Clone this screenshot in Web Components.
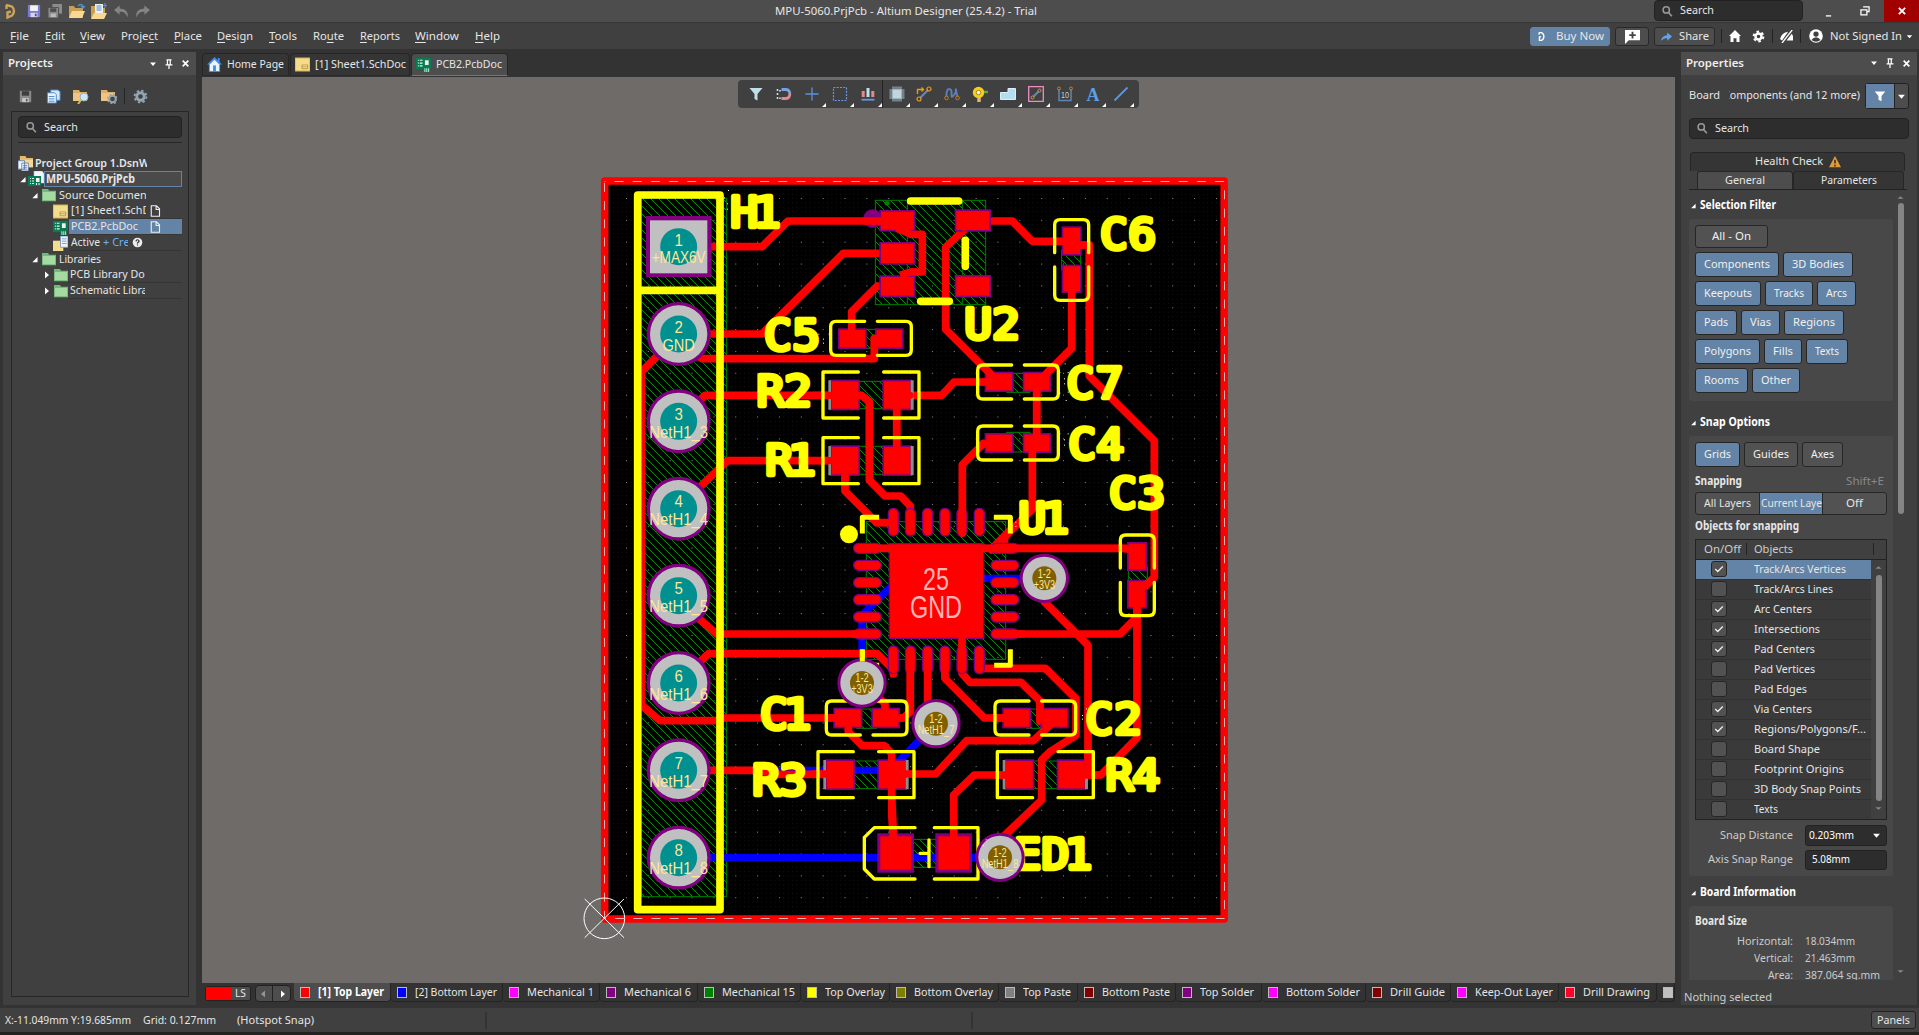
<!DOCTYPE html>
<html lang="en">
<head>
<meta charset="utf-8">
<title>MPU-5060.PrjPcb - Altium Designer</title>
<style>
html,body{margin:0;height:100%;overflow:hidden;background:#333}
body{font:12px/1 "Noto Sans","Open Sans",sans-serif;color:#e6e6e6}
</style>
</head>
<body>
<pcb-app></pcb-app>
<script>
const define = (name, html, setup) => customElements.define(name, class extends HTMLElement {
  connectedCallback() {
    if (this.shadowRoot) return;
    const root = this.attachShadow({ mode: 'open' });
    root.innerHTML = typeof html === 'function' ? html(this) : html;
    if (setup) setup(this, root);
  }
});
const t = (s, w, cls = '') => `<ui-text w="${w}" class="${cls}">${s}</ui-text>`;

/* text set to an exact advance width */
define('ui-text', `<style>:host{display:inline-block;white-space:pre;line-height:1.3;flex:none}span{display:inline-block;transform-origin:0 50%}</style><span><slot></slot></span>`,
  (el, root) => {
    const w = +el.getAttribute('w'), s = root.querySelector('span');
    if (!w) return;
    const n = s.getBoundingClientRect().width;
    el.style.width = w + 'px';
    s.style.transform = `scaleX(${w / n})`;
  });

const ICONS = {
  logo: `<path d="M3 2l6 1.500q4 4.500 0 9L4.500 14.500V9.500L8 8.500M3.500 2v4" fill="none" stroke="#c9a55c" stroke-width="2.400"/>`,
  logow: `<path d="M4 2.500h4q3.500 1.500 3.500 5.500T8 13.500H5V8.500h2.500M4.500 2.500v3" fill="none" stroke="#fff" stroke-width="1.900"/>`,
  save: `<path d="M1 1h14v14H1z" fill="#7b78d6"/><path d="M3.500 1.500h9V8h-9z" fill="#f2f2f2"/><path d="M4 10h8v5H4z" fill="#d7d7e8"/><path d="M9 11h2v3H9z" fill="#4b489c"/>`,
  saveg: `<path d="M1 1h14v14H1z" fill="#8b8b8b"/><path d="M3.500 1.500h9V7h-9z" fill="#3f3f3f"/><path d="M4 10h8v5H4z" fill="#c8c8c8"/><path d="M8.500 11h2v3h-2z" fill="#555"/>`,
  saveall: `<path d="M5 0h11v11H5z" fill="#8b8b8b"/><path d="M0 4h12v12H0z" fill="#8b8b8b" stroke="#4c4c4c"/><path d="M2.500 5h7v4h-7z" fill="#4c4c4c"/><path d="M3 11h6v4H3z" fill="#bbb"/>`,
  open: `<path d="M0 3h5l1 2h8v10H0z" fill="#c99f52"/><path d="M3 8h13l-3 7H0z" fill="#f8d893"/><path d="M9 3q3-3 5 0v2m-2-2l2 2 2-2" fill="none" stroke="#4d92d6" stroke-width="1.300"/>`,
  openp: `<path d="M0 3h5l1 2h8v10H0z" fill="#c99f52"/><path d="M4 1h8v10H4z" fill="#eef3fa"/><path d="M5.500 3h5m-5 2h5m-5 2h5" stroke="#5a87b8"/><path d="M3 10h13l-3 6H0z" fill="#f8d893"/><path d="M14 0v5m-2-2.500h4" stroke="#4d92d6" stroke-width="1.200"/>`,
  undo: `<path d="M6 1.500L0 6.500l6 5V8.300q6-1 8.500 6Q16 5 6 4.700z" fill="#848484"/>`,
  redo: `<path d="M10 1.500l6 5-6 5V8.300q-6-1-8.500 6Q0 5 10 4.700z" fill="#848484"/>`,
  docs: `<path d="M5 1h8l2 2v9H5z" fill="#d5e7fa" stroke="#4a86c8"/><path d="M1.500 4H9l2 2v9H1.500z" fill="#e8f2fd" stroke="#4a86c8"/><path d="M3 8h6m-6 2.500h6M3 13h6" stroke="#4a86c8"/>`,
  fsearch: `<path d="M0 2h6l1 2h7v9H0z" fill="#dcae68"/><path d="M0 5h14v8H0z" fill="#efc584"/><circle cx="11" cy="9" r="4" fill="#cfe6f5" stroke="#8db1c9"/><path d="M8 12l-3 4" stroke="#e2b84e" stroke-width="2"/>`,
  fgear: `<path d="M0 2h6l1 2h7v9H0z" fill="#dcae68"/><path d="M0 5h14v8H0z" fill="#efc584"/><circle cx="11.500" cy="11" r="3.300" fill="#454545" stroke="#93a5b3" stroke-width="2"/><circle cx="11.500" cy="11" r="4.700" fill="none" stroke="#93a5b3" stroke-width="1.500" stroke-dasharray="1.800 1.890"/>`,
  gear: `<circle cx="8" cy="8" r="4" fill="none" stroke="#93a5b3" stroke-width="3"/><circle cx="8" cy="8" r="6.300" fill="none" stroke="#93a5b3" stroke-width="2" stroke-dasharray="2.500 2.450"/>`,
  gearw: `<circle cx="8" cy="8" r="3.700" fill="none" stroke="#fff" stroke-width="3"/><circle cx="8" cy="8" r="6" fill="none" stroke="#fff" stroke-width="2.500" stroke-dasharray="3.100 3.180"/>`,
  search: `<circle cx="7" cy="6.500" r="4.200" fill="none" stroke="#999" stroke-width="2"/><path d="M10 10l4.500 5" stroke="#999" stroke-width="2.200"/>`,
  home: `<path d="M8 0L0 8h2v8h12V8h2l-2.500-2.600V1h-2v2.500z" fill="#3e8bf0"/><path d="M8 3L3 8v7h10V8z" fill="#eaf4ff"/><path d="M6.500 9h3v6h-3z" fill="#3e8bf0"/>`,
  homew: `<path d="M8 0L0 8h2v8h4v-5h4v5h4V8h2z" fill="#fff"/>`,
  sch: `<path d="M0 1h16v14H0z" fill="#f3dd8c"/><path d="M0 1h16v14H0z" fill="none" stroke="#caa648"/><path d="M7.500 8.500h6v4h-6zM7.500 10.500h6" stroke="#b8953c" fill="#fbf0c0"/>`,
  pcb: `<path d="M0 1h16v11h-2v4h-6v-3H0z" fill="#0a7a52"/><path d="M2 3.500h1m1 0h3M2 6.500h1m1 0h3M2 9.500h1m1 0h3" stroke="#d9ffe8" stroke-width="1.200"/><path d="M9.500 3.500h4v5h-4z" fill="#f2f2f2"/><path d="M9.500 12v4m2-4v4m2-4v4" stroke="#c9f5dc"/>`,
  prj: `<path d="M6 0h8l2 2.500V12H6z" fill="#f2f6fb" stroke="#bbb" stroke-width=".6"/><path d="M0 5h13v10H0z" fill="#0a7a52"/><path d="M2 7.500h1m1 0h2M2 10h1m1 0h2m-4 2.500h1m1 0h2" stroke="#d9ffe8" stroke-width="1.200"/><path d="M8 7h3.500v4H8zM8 12h1v2H8zm2.500 0h1v2h-1z" fill="#f2f2f2"/>`,
  grp: `<path d="M2 0h6l1 2h7v10H2z" fill="#e3b96e"/><path d="M2 4h14v8H2z" fill="#f5d79a"/><path d="M0 5h7v9H0zM4 7.500h7V16H4z" fill="#f0f5fb" stroke="#5b7ba6" stroke-width=".9"/><path d="M5.500 10h4m-4 2h4m-4 2h4" stroke="#5b7ba6"/>`,
  act: `<path d="M0 5h11v11H0z" fill="#f3dd8c"/><path d="M8 0h8v12H8z" fill="#f0f5fb" stroke="#7a99c0"/><path d="M9.500 3h5m-5 2.500h5m-5 2.500h5" stroke="#7a99c0"/>`,
  folder: `<path d="M0 1h7l1 2h8v12H0z" fill="#73b878"/><path d="M1 4.500h14V14H1z" fill="#a5dba3"/>`,
  page: `<path d="M3 1h7l4 4v10H3zM9.500 1v5H14" fill="none" stroke="#eee" stroke-width="1.500"/>`,
  help: `<circle cx="8" cy="8" r="7" fill="#eee"/><path d="M5.800 6.300Q6 4 8 4t2.200 2q0 1-1.200 1.700T8 9.600m0 1.200v1.700" fill="none" stroke="#333" stroke-width="1.800"/>`,
  caret: `<path d="M2 5h12l-6 7z" fill="#fff"/>`,
  pin: `<path d="M4 1.500h8M5.500 2v7M10 2v7M2.500 9.500h11M8 10v6" fill="none" stroke="#fff" stroke-width="2"/>`,
  close: `<path d="M3 3l10 10M13 3L3 13" stroke="#fff" stroke-width="3"/>`,
  min: `<path d="M2 12h12v3H2z" fill="#fff"/>`,
  restore: `<path d="M5 1.500h9.500V9H11M1.500 6H11v8H1.500z" fill="none" stroke="#fff" stroke-width="2"/>`,
  chat: `<path d="M0 1h16v11H4l-4 4z" fill="#fff"/><path d="M8 3v7M4.500 6.500h7" stroke="#444" stroke-width="2"/>`,
  share: `<path d="M9 2l7 6-7 6v-4Q4 10 0 14q1-7 9-8z" fill="#5aa7f2"/>`,
  eye: `<path d="M0 11Q2 3 10 2L2.500 13zM8 13L14.500 4.500Q17 8 16 13z" fill="#fff"/><path d="M2.500 16L15 0" stroke="#fff" stroke-width="1.600"/>`,
  user: `<circle cx="8" cy="8" r="7.800" fill="#fff"/><circle cx="8" cy="5.800" r="3" fill="#404040"/><path d="M2.800 12.500Q5 9.500 8 9.500t5.200 3Q8 16.500 2.800 12.500z" fill="#404040"/>`,
  funnel: `<path d="M1 2h14l-5 6v7l-4-2V8z" fill="#fff"/>`,
  warn: `<path d="M8 0l8 15H0z" fill="#e09a3e"/><path d="M8 5v5m0 1.500V14" stroke="#3a2a10" stroke-width="2"/>`,
  tri: `<path d="M15 2v12H3z" fill="#fff"/>`,
  trir: `<path d="M4 1l8 7-8 7z" fill="#fff"/>`,
  up: `<path d="M1 11l7-6 7 6z" fill="#888"/>`,
  down: `<path d="M1 5l7 6 7-6z" fill="#888"/>`,
  check: `<path d="M2 8l4 4 8-8" fill="none" stroke="#eee" stroke-width="2.200"/>`,
  b1: `<path d="M1.500 2h13L9.500 8v6.500l-3-1.500V8z" fill="#bfe0ea"/>`,
  b2: `<path d="M5.500 3.500H10q3.800.3 3.800 4.500" fill="none" stroke="#7aa2e0" stroke-width="2.800"/><path d="M13.800 8q0 4.200-3.800 4.500H5.500" fill="none" stroke="#e58a8a" stroke-width="2.800"/><path d="M1.500 3v2m0 2v2m0 2v2M4 4v1.500m0 6V13" stroke="#c8dede" stroke-width="1.600"/>`,
  b3: `<path d="M8 1.500v13M1.500 8h13" stroke="#5f8fe0" stroke-width="1.300"/>`,
  b4: `<path d="M1.500 1.500h13v13h-13z" fill="none" stroke="#6d95e6" stroke-width="1.200" stroke-dasharray="2 1.250"/>`,
  b5: `<path d="M3.200 5v6M12.800 5v6" stroke="#e58a8a" stroke-width="3"/><path d="M8 2v9" stroke="#bfe0ea" stroke-width="3"/><path d="M1.500 13.700h13" stroke="#5f9be8" stroke-width="1.800"/>`,
  b6: `<path d="M3 3h10v10H3z" fill="#c5d3da" stroke="#7396ac"/><path d="M4 .5v2m2-2v2m2-2v2m2-2v2m2-2v2M4 13.500v2m2-2v2m2-2v2m2-2v2m2-2v2M.5 4h2m-2 2h2m-2 2h2m-2 2h2m-2 2h2M13.500 4h2m-2 2h2m-2 2h2m-2 2h2m-2 2h2" stroke="#a9c4d4"/>`,
  b7: `<path d="M4 12l8-8" stroke="#6c87b0" stroke-width="2"/><circle cx="3" cy="13" r="2" fill="none" stroke="#e59c1e" stroke-width="1.200"/><circle cx="13" cy="3" r="2" fill="none" stroke="#e59c1e" stroke-width="1.200"/><path d="M1.500 8V3.500H7M5.500 1.500l2 2-2 2" fill="none" stroke="#e59c1e" stroke-width="1.400"/>`,
  b8: `<path d="M2.500 12Q2 3 5 3t2.500 5T10 9t2-5.500T14 12" fill="none" stroke="#5d7db5" stroke-width="2"/><circle cx="2.500" cy="12" r="1.800" fill="#404040" stroke="#c07f28"/><circle cx="13.500" cy="12" r="1.800" fill="#404040" stroke="#c07f28"/>`,
  b9: `<path d="M8 6h8" stroke="#58a844" stroke-width="2.500"/><path d="M7 7v9" stroke="#e6b36a" stroke-width="3.500"/><circle cx="6.500" cy="6.500" r="5.700" fill="#f5cd1c"/><circle cx="6.500" cy="6.500" r="2.200" fill="#fff" stroke="#a77f12"/>`,
  b10: `<path d="M.5 6.500H8v-4h7.500v11H.5z" fill="#b5dff0" stroke="#d8f1fa"/>`,
  b11: `<path d="M.7.700h14.600v14.600H.7z" fill="none" stroke="#f08cc8" stroke-width="1.300"/><path d="M5 11l6-6" stroke="#6c87b0" stroke-width="2"/><circle cx="4.500" cy="11.500" r="1.500" fill="#404040" stroke="#e59c1e"/><circle cx="11.500" cy="4.500" r="1.500" fill="#404040" stroke="#e59c1e"/>`,
  b12: `<path d="M2 3v11.500h12V3" fill="none" stroke="#5d86ae" stroke-width="1.500"/><circle cx="2" cy="2.500" r="1.500" fill="none" stroke="#c07f28"/><circle cx="14" cy="2.500" r="1.500" fill="none" stroke="#c07f28"/><text x="8" y="12" font-size="9" textLength="8" lengthAdjust="spacingAndGlyphs" text-anchor="middle" fill="#ccc" font-family="Liberation Sans">10</text>`,
  b13: `<text x="8" y="14.500" font-size="18" font-weight="700" text-anchor="middle" fill="#5b9fe6" font-family="Liberation Serif">A</text>`,
  b14: `<path d="M1.500 14.500l13-13" stroke="#4f9be8" stroke-width="1.800"/>`,
};
define('ui-icon', el => {
  const s = el.getAttribute('s') || 14;
  return `<style>:host{display:block;flex:none;width:${s}px;height:${s}px}svg{display:block}</style><svg width="${s}" height="${s}" viewBox="0 0 16 16">${ICONS[el.getAttribute('n')] || ''}</svg>`;
});
const ic = (n, s = 14, st = '') => `<ui-icon n="${n}" s="${s}" style="${st}"></ui-icon>`;

define('search-field', `<style>:host{display:flex;align-items:center;box-sizing:border-box;background:#2d2d2d;border:1px solid #222;border-radius:4px;padding-left:6px;gap:7px;font-size:11.500px}</style>${ic('search', 12)}<slot></slot>`);

define('title-bar', `<style>
:host{display:flex;height:22px;background:#4d4d4d;border-bottom:1px solid #363636;align-items:center}
.q{display:flex;gap:7px;padding-left:3px;flex:0 0 775px;box-sizing:border-box;align-items:center}
.c{font-size:11.500px}.r{flex:1;display:flex;justify-content:flex-end;align-items:center;height:22px}
search-field{width:149px;height:21px;margin:-1px 20px 0 0}
.x{width:35px;height:22px;background:#a00000;display:grid;place-items:center;margin-left:14px}
</style>
<div class="q">${ic('logo', 16)}${ic('save', 14, 'margin-left:1px')}${ic('saveall', 14)}${ic('open', 16, 'margin-right:-1px')}${ic('openp', 16)}${ic('undo', 15, 'margin-right:-1px')}${ic('redo', 15)}</div>
${t('MPU-5060.PrjPcb - Altium Designer (25.4.2) - Trial', 262, 'c')}
<div class="r"><search-field>${t('Search', 34)}</search-field>${ic('min', 7, 'margin:4px 28px 0 2px')}${ic('restore', 10)}<div class="x">${ic('close', 10)}</div></div>`);

define('menu-bar', `<style>
:host{display:flex;height:26px;background:#404040;align-items:center;padding-left:10px;font-size:11.500px}
u{text-underline-offset:2px}nav{display:flex;gap:15.700px;flex:1}
.b{display:flex;align-items:center;box-sizing:border-box;height:19px;border-radius:3px;border:1px solid #292929;background:#4d4d4d;justify-content:center;gap:7px}
.buy{width:80px;background:#6384a6;border-color:#6384a6;gap:9px}.s{width:1px;height:14px;background:#222}
</style>
<nav>${t('<u>F</u>ile', 19)}${t('<u>E</u>dit', 20)}${t('<u>V</u>iew', 25)}${t('Proje<u>c</u>t', 37)}${t('<u>P</u>lace', 28)}${t('<u>D</u>esign', 36)}${t('<u>T</u>ools', 28)}${t('Ro<u>u</u>te', 31)}${t('<u>R</u>eports', 40)}${t('<u>W</u>indow', 44)}${t('<u>H</u>elp', 25)}</nav>
<div class="b buy">${ic('logow', 11)}${t('Buy Now', 48)}</div><div class="b" style="width:34px;margin:0 5px">${ic('chat', 15)}</div>
<div class="b" style="width:61px">${ic('share', 11)}${t('Share', 30)}</div>
<div class="s" style="margin:0 7px 0 6px"></div>${ic('homew', 12)}<i style="width:11px"></i>${ic('gearw', 13)}<div class="s" style="margin:0 7px"></div>${ic('eye', 13)}<div class="s" style="margin:0 8px 0 7px"></div>${ic('user', 14)}<i style="width:7px"></i>${t('Not Signed In', 72)}${ic('caret', 7, 'margin:0 6px 0 4px')}`);

define('panel-head', `<style>:host{display:flex;height:23px;background:#4d4d4d;align-items:center;padding:0 6px 0 5px;gap:7px;font-size:11.500px;font-weight:600;box-sizing:border-box}div{flex:1;display:flex;color:#eee}</style>
<div><slot></slot></div>${ic('caret', 8)}${ic('pin', 10)}${ic('close', 9)}`);

const row = (pad, arrow, icon, body, cls = '') => `<div class="row ${cls}"><i style="width:${pad}px"></i>${arrow}${icon}${body}</div>`;
define('projects-panel', `<style>
:host{display:flex;flex-direction:column;width:193px;background:#404040;font-size:11.500px}
.tools{display:flex;height:20px;margin:11px 0 5px 15.500px;align-items:center}
.frame{flex:1;border:1px solid #272727;margin:0 7.500px 8px 8px;padding:4px 6px 0}
search-field{height:22px}.hr{height:1px;background:#262626;margin:4px 0 12px}
.row{display:flex;height:16px;align-items:center}.clip{overflow:hidden;height:16px;display:flex;align-items:center}
.lbl{display:flex;align-items:center;flex:1;height:16px;box-sizing:border-box;border-bottom:1px solid #353535;padding-left:2px}
.cur{border:1px solid #6384a6;background:#4a4a4a;font-weight:700;padding-left:1px}.sel{background:#6384a6}
b{font-weight:600}
</style>
<panel-head>${t('Projects', 45)}</panel-head>
<div class="tools">${ic('saveg', 13, 'margin-right:14px')}${ic('docs', 15, 'margin-right:12.500px')}${ic('fsearch', 16, 'margin-right:12px')}${ic('fgear', 16, 'margin-right:7px')}<i style="width:1px;height:16px;background:#262626;margin-right:8px"></i>${ic('gear', 15)}</div>
<div class="frame"><search-field>${t('Search', 34)}</search-field><div class="hr"></div>
${row(0, '', ic('grp', 15), `<div class="clip" style="width:112px;margin-left:2px"><b>${t('Project Group 1.DsnWrk', 125)}</b></div>`)}
${row(1, ic('tri', 7), '', `<i style="width:2px"></i>${ic('prj', 16)}<div class="lbl cur">${t('MPU-5060.PrjPcb', 89)}</div>`)}
${row(13, ic('tri', 7), '', `<i style="width:4px"></i>${ic('folder', 14)}<div class="clip" style="width:87px;margin-left:3px">${t('Source Documents', 97)}</div>`)}
${row(35, '', ic('sch', 15), `<div class="lbl" style="margin-left:1px"><div class="clip" style="width:75px">${t('[1] Sheet1.SchDoc', 91)}</div>${ic('page', 12, 'margin-left:3px')}</div>`)}
${row(35, '', ic('pcb', 15), `<div class="lbl sel" style="margin-left:1px"><div class="clip" style="width:75px">${t('PCB2.PcbDoc', 67)}</div>${ic('page', 12, 'margin-left:3px')}</div>`)}
${row(35, '', ic('act', 15), `<div class="lbl" style="margin-left:1px"><div class="clip" style="width:57px">${t('Active', 29)}<span style="color:#6cb0f5;display:flex;margin-left:3px">${t('+ Create', 43)}</span></div>${ic('help', 11, 'margin-left:4px')}</div>`)}
${row(13, ic('tri', 7), '', `<i style="width:4px"></i>${ic('folder', 14)}<div class="clip" style="margin-left:3px">${t('Libraries', 42)}</div>`)}
${row(25, ic('trir', 8), '', `<i style="width:3px"></i>${ic('folder', 14)}<div class="lbl"><div class="clip" style="width:75px">${t('PCB Library Documents', 118)}</div></div>`)}
${row(25, ic('trir', 8), '', `<i style="width:3px"></i>${ic('folder', 14)}<div class="lbl"><div class="clip" style="width:75px">${t('Schematic Library Documents', 146)}</div></div>`)}
</div>`);

define('doc-tabs', `<style>
:host{display:flex;height:25px;gap:1px;font-size:11.500px;padding-top:1px;box-sizing:border-box}
div{display:flex;align-items:center;box-sizing:border-box;height:23px;border:1px solid #262626;border-bottom-color:#2a2a2a;border-radius:4px 4px 0 0;background:#353535;gap:5px;padding-left:4px}
.on{background:#4d4d4d;border-bottom:1px solid #777}</style>
<div style="width:87px">${ic('home', 15)}${t('Home Page', 57)}</div><div style="width:120px">${ic('sch', 15)}${t('[1] Sheet1.SchDoc', 91)}</div><div class="on" style="width:97px">${ic('pcb', 15)}${t('PCB2.PcbDoc', 66)}</div>`);

define('draw-toolbar', () => `<style>
:host{display:flex;width:401px;height:28px;box-sizing:border-box;background:#404040;border-radius:4px;padding-left:4px}
div{width:28.050px;height:28px;display:grid;place-items:center;position:relative}
.m::after{content:"";position:absolute;right:.5px;bottom:1px;border:2.500px solid transparent;border-right-color:#fff;border-bottom-color:#fff}
.s{border-left:1px solid #222;box-sizing:border-box}</style>` +
  Array.from({ length: 14 }, (_, i) => `<div class="${i > 1 ? 'm' : ''} ${i === 5 ? 's' : ''}">${ic('b' + (i + 1), 16)}</div>`).join(''));

/* ---- board drawing, coordinates in thirds of a pixel ---- */
const tr = (...p) => p.map(s => `<polyline points="${s}"/>`).join('');
const pad = (x1, y1, x2, y2, b = 5) => `<rect x="${x1 + b / 2}" y="${y1 + b / 2}" width="${x2 - x1 - b}" height="${y2 - y1 - b}" fill="#f00" stroke="#800080" stroke-width="${b}"/>`;
const hatch = (x1, y1, x2, y2) => `<rect x="${x1}" y="${y1}" width="${x2 - x1}" height="${y2 - y1}" fill="url(#h)" stroke="#008000" stroke-width="3"/>`;
const capH = (x, y) => `<path d="M${x - 19} ${y - 51}H${x - 105}q-16 0-16 16v70q0 16 16 16H${x - 19}M${x + 19} ${y - 51}H${x + 105}q16 0 16 16v70q0 16-16 16H${x + 19}"/>`;
const capV = (x, y) => `<path d="M${x - 51} ${y - 22}V${y - 105}q0-16 16-16h70q16 0 16 16V${y - 22}M${x - 51} ${y + 21}V${y + 105}q0 16 16 16h70q16 0 16-16V${y + 21}"/>`;
const resO = (x, y) => `<path d="M${x - 38} ${y - 69}H${x - 144}V${y + 69}H${x - 38}M${x + 38} ${y - 69}H${x + 144}V${y + 69}H${x + 38}"/>`;
const resP = (x, y) => `${pad(x - 123, y - 46, x - 33, y + 46)}${pad(x + 34, y - 46, x + 123, y + 46)}<path d="M${x - 120} ${y - 44}h-8v88h8zM${x + 119} ${y - 44}h9v88h-9z" fill="#8c8c8c"/>`;
const DX = 1.1;
const des = (s, xs, b) => `<text transform="scale(${DX} 1)" x="${xs.map(v => (v / DX - 37.5).toFixed(1)).join(' ')}" y="${b - 7}">${s}</text>`;
const lab = (s, x, y, w, size, fill = '#ffe699') => `<text x="${x}" y="${y + size * .36}" font-size="${size}" fill="${fill}" text-anchor="middle" ${w ? `textLength="${w}" lengthAdjust="spacingAndGlyphs"` : ''}>${s}</text>`;
const hole = (n, net, y, w) => `<circle cx="266" cy="${y}" r="96" fill="#800080"/><circle cx="266" cy="${y}" r="86" fill="#c0c0c0"/><circle cx="266" cy="${y}" r="55.500" fill="#009090"/>${lab(n, 266, y - 23, 25, 52)}${lab(net, 266, y + 31, w, 52)}`;
const via = (x, y, net, w) => `<circle cx="${x}" cy="${y}" r="74" fill="#800080"/><circle cx="${x}" cy="${y}" r="65" fill="#c0c0c0"/><circle cx="${x}" cy="${y}" r="36" fill="#7f6000"/>${lab('1-2', x, y - 15, 40, 36)}${lab(net, x, y + 18, w, 36)}`;
const pinV = y => [220, 271.5, 323, 375, 426, 478].map(x => `<rect x="${x - 15}" y="${y}" width="30" height="83" rx="15"/>`).join('');
const pinH = x => [145, 196, 248, 299, 351, 402].map(y => `<rect x="${x}" y="${y - 15}" width="83" height="30" rx="15"/>`).join('');
const A = s => `<g>${s}</g>`, B = s => `<g transform="translate(690 0)">${s}</g>`, C = s => `<g transform="translate(0 1110)">${s}</g>`, D = s => `<g transform="translate(690 990)">${s}</g>`;
const dots = pts => pts.map(([x, y]) => `<rect x="${x}" y="${y}" width="3" height="3" fill="#fff"/>`).join('');

define('pcb-board', () => `<style>:host{display:block}svg{display:block}text{font-family:"Liberation Sans",sans-serif}
.des text{font-family:"DejaVu Sans Mono",monospace;font-size:126px;fill:#ff0;stroke:#ff0;stroke-width:13px;stroke-linejoin:round}</style>
<svg width="1473" height="906" viewBox="202 77 1473 906"><defs>
<pattern id="h" width="24" height="24" patternUnits="userSpaceOnUse"><path d="M-3 -3L27 27M-3 21L3 27M21 -3L27 3" stroke="#008c00" stroke-width="3"/></pattern>
<pattern id="g" x="626" y="198" width="21.850" height="21.850" patternUnits="userSpaceOnUse"><rect width="1" height="1" fill="#8a8a8a"/></pattern>
<pattern id="f" x="626" y="198" width="4.370" height="4.370" patternUnits="userSpaceOnUse"><rect width="1" height="1" fill="#141414"/></pattern></defs>
<rect x="604.500" y="181" width="620" height="738"/><rect x="604.500" y="181" width="620" height="738" fill="url(#f)"/><rect x="608" y="185" width="612" height="730" fill="url(#g)"/>
<rect x="604.700" y="181" width="619.500" height="738" fill="none" stroke="#f00" stroke-width="7.500" stroke-linejoin="round"/>
<rect x="604.500" y="181.500" width="620" height="737" fill="none" stroke="#d9b3b3" stroke-dasharray="9 9.200" stroke-dashoffset="-10"/>
<g transform="translate(590 170) scale(.333333)" fill="none">
${A(hatch(154, 85, 410, 2180))}
${B(hatch(166, 91, 497, 404) + '<path d="M262 91V404M427 91V404" stroke="#008000" stroke-width="3"/><circle cx="201" cy="100" r="7" fill="#008000"/>' + hatch(118, 478, 190, 535) + hatch(118, 634, 190, 716) + hatch(118, 829, 190, 913) + hatch(560, 610, 630, 667) + hatch(560, 787, 630, 846) + hatch(725, 240, 782, 300))}
${D(hatch(139, 65, 557, 478) + hatch(925, 200, 982, 255) + hatch(110, 627, 170, 685) + hatch(620, 627, 680, 685) + hatch(95, 783, 185, 866) + hatch(630, 783, 720, 866) + hatch(270, 1018, 360, 1102))}
<g stroke="#00f" stroke-width="22">
${C(tr('525,691 905,691'))}${D(tr('-338,1073 540,1073', '215,805 348,671', '480,235 673,235', '126,549 126,345 215,258'))}</g>
<g stroke="#f00" stroke-width="23" stroke-linecap="round" stroke-linejoin="round">
${A(tr('340,230 516,230 594,153 880,153', '340,492 516,492 760,250 880,250', '290,520 335,566 853,566 853,505 890,505', '315,705 345,676 760,676', '320,960 412,872 760,872', '210,550 154,606 154,1605 210,1652 385,1652 400,1644 770,1644', '880,348 862,348 785,425 785,490'))}
${B(tr('230,160 273,193 307,193 307,306 273,306 240,340', '458,155 377,232 377,478 530,630', '480,153 577,153 637,214 755,214', '755,225 808,225 808,618 1003,812 1003,1222 960,1265', '755,330 755,535 660,630', '240,676 365,676 402,636 530,636', '650,640 650,820', '637,820 637,1018 515,1140', '530,820 490,820 427,884 427,1060', '75,676 125,676 148,695 148,930 195,978 242,978 271,1008 271,1060', '230,690 230,850', '75,880 75,963 170,1058 220,1058'))}
${C(tr('320,230 380,282 840,282', '320,375 355,341 862,341 910,389 910,402', '961,360 961,515 940,534 890,534', '816,430 885,490 885,520', '775,540 775,575 817,617 883,617 905,640 905,770 911,900', '340,691 520,691 535,703 750,703'))}
${D(tr('140,145 940,145', '555,402 900,402 950,352', '951,300 951,714 843,825 760,825', '673,235 673,305 804,436 804,815', '323,480 323,620', '375,480 375,535 493,654 580,654', '426,400 426,520 450,547 603,547 660,603 660,665', '478,480 478,505 676,505 768,596 768,706 690,755 665,780 665,900 545,1015', '700,665 640,722 440,722 347,822 230,822', '401,1040 401,885 463,825 580,825'))}</g>
${B('<path d="M505 1130L565 1070V1130z" fill="#f00"/><circle cx="158" cy="146" r="28" fill="#800080"/>' + pad(178, 120, 286, 184) + pad(178, 216, 286, 284) + pad(178, 316, 286, 382) + pad(404, 118, 513, 185) + pad(404, 315, 513, 382)
  + '<path d="M130 153H200M230 175L273 193H290M240 315L273 306H290M425 175L458 160" stroke="#f00" stroke-width="22"/>'
  + pad(54, 475, 140, 537) + pad(165, 475, 251, 537) + pad(494, 605, 581, 666) + pad(608, 605, 693, 666) + pad(494, 789, 581, 849) + pad(608, 789, 693, 849) + pad(725, 169, 785, 257) + pad(725, 284, 785, 369) + resP(153, 675) + resP(153, 872))}
${D('<g fill="#f00" stroke="#800080" stroke-width="4">' + pinV(25) + pinV(438) + pinH(101) + pinH(513) + '</g>' + '<rect x="208" y="131" width="283" height="284" fill="#f00" stroke="#800080" stroke-width="4"/>'
  + pad(40, 623, 127, 685) + pad(154, 623, 240, 685) + pad(547, 623, 633, 685) + pad(660, 623, 746, 685) + pad(921, 126, 981, 213) + pad(921, 239, 981, 326) + resP(138, 824) + resP(676, 824) + pad(172, 1000, 282, 1118, 9) + pad(346, 1000, 456, 1118, 9))}
<g stroke="#f00" stroke-width="22" stroke-linecap="round" stroke-linejoin="round">
${B(tr('95,500 95,470', '163,530 163,505 190,505', '40,676 -20,676', '75,676 125,676 148,695', '270,676 240,676', '230,700 230,850', '75,900 75,950', '40,872 -20,872', '500,600 530,630', '690,600 660,630', '510,636 490,636', '650,645 650,820', '637,830 637,860', '490,822 520,822', '740,214 700,214', '770,225 808,225', '755,350 755,390', '271,1030 271,1080', '427,1020 427,1090', '170,1058 220,1058'))}
${D(tr('115,145 912,145 935,150', '150,402 100,402', '570,402 610,402', '426,395 426,500', '323,460 323,600', '271,460 271,600', '375,460 375,530', '965,265 1003,232', '951,310 951,400', '60,654 20,654', '195,640 195,625', '220,654 245,654', '85,660 85,690', '660,603 660,660', '700,665 675,690', '560,654 520,654', '230,822 270,822', '215,780 215,950 221,1040', '401,1030 401,950', '580,825 530,825', '780,825 830,825', '804,760 804,815', '30,822 -20,822'))}</g>
<g stroke="#ff0" stroke-width="23" stroke-linejoin="round" stroke-linecap="round">
${A('<path d="M143 75H390V2219H143zM143 361H390"/>')}
${B('<path d="M272 93H416M302 394H388M436 211V289"/>')}
<g stroke-width="10">${B(capH(153, 505) + capH(594, 636) + capH(594, 819) + capV(755, 270) + resO(153, 675) + resO(153, 872))}
${D(capH(140, 654) + capH(646, 654) + capV(952, 226) + resO(138, 824) + resO(676, 824) + '<path d="M285 983H163L133 1012V1107L163 1137H285M343 983H474V1137H343M327 1020V1100M300 1060H327"/>')}</g>
${D('<g stroke-width="15" stroke-linecap="square"><path d="M127 93V52H170M529 52H571V93M571 455V496H530M127 455V496H170"/></g><circle cx="87" cy="103" r="27" fill="#ff0" stroke="none"/>')}</g>
<g class="des">
${A(des('H1', [462, 530], 179) + des('C5', [563, 648], 546) + des('R2', [541, 623], 715) + des('R1', [567, 635], 923))}
${B(des('C6', [881, 966], 244) + des('U2', [474, 557], 513) + des('C7', [781, 868], 690) + des('C4', [786, 870], 873) + des('C3', [908, 993], 1020) + des('U1', [636, 705], 1095))}
${C(des('C1', [551, 622], 575) + des('R3', [528, 609], 771))}
${D(des('C2', [838, 923], 708) + des('R4', [898, 978], 878) + des('LED1', [538, 622, 706, 775], 1114))}</g>
${A('<rect x="168" y="138" width="196" height="183" fill="#800080"/><rect x="180" y="151" width="172" height="159" fill="#c0c0c0"/><circle cx="266" cy="230" r="55.500" fill="#009090"/>' + lab('1', 266, 209, 25, 52) + lab('+MAX6V', 266, 259, 162, 52)
  + hole('2', 'GND', 492, 97) + hole('3', 'NetH1_3', 754, 176) + hole('4', 'NetH1_4', 1016, 176) + hole('5', 'NetH1_5', 1277, 176) + hole('6', 'NetH1_6', 1539, 176) + hole('7', 'NetH1_7', 1801, 176) + hole('8', 'NetH1_8', 2063, 176))}
${D(lab('25', 348, 237, 78, 92, '#ffb3b3') + lab('GND', 348, 321, 156, 92, '#ffb3b3') + via(673, 235, '+3V3', 64) + via(126, 549, '+3V3', 64) + via(348, 671, 'NetH1_7', 110) + via(540, 1072, 'NetH1_8', 110) + '<path d="M127 452V484" stroke="#ff0" stroke-width="15"/>')}
${dots([[414, 60], [402, 82], [426, 82], [411, 100], [411, 116], [685, 491], [716, 491], [699, 506], [699, 518]])}
${B(dots([[734, 580], [718, 606], [743, 606], [732, 625], [732, 640], [718, 668], [743, 665], [737, 690], [718, 790], [743, 790], [732, 808], [732, 824], [575, 1043], [597, 1043], [586, 1055], [586, 1068]]))}
${D(dots([[765, 625], [798, 625], [786, 645], [786, 656], [475, 1018], [497, 1018], [488, 1035]]))}
${C('<g stroke="#fff" stroke-width="3"><circle cx="43" cy="1135" r="61"/><path d="M-16 1077L102 1193M102 1077L-16 1193"/></g>')}
</g></svg>`);

const LAYERS = [['[1] Top Layer', '#f00', 97, 66], ['[2] Bottom Layer', '#00f', 112, 82], ['Mechanical 1', '#f0f', 97, 67], ['Mechanical 6', '#800080', 98, 67], ['Mechanical 15', '#008000', 103, 73], ['Top Overlay', '#ff0', 89, 60], ['Bottom Overlay', '#808000', 109, 79], ['Top Paste', '#808080', 79, 48], ['Bottom Paste', '#800000', 98, 68], ['Top Solder', '#800080', 86, 54], ['Bottom Solder', '#f0f', 104, 74], ['Drill Guide', '#800000', 85, 55], ['Keep-Out Layer', '#f0f', 108, 78], ['Drill Drawing', '#ff0026', 98, 67], ['', '#c0c0c0', 18, 0]];
define('layer-bar', () => `<style>
:host{display:flex;height:19px;font-size:11.500px;overflow:hidden;border-top:0}
.k{display:flex;align-items:center;height:19px;box-sizing:border-box;border:1px solid #232323;border-top:0;border-left:0;border-radius:0 0 4px 4px;padding-left:6px;flex:none;gap:8px}
.k i{width:8px;height:9px;border:1px solid #bbb;flex:none}.on{background:#4d4d4d;font-weight:700;color:#fff}.k ui-text{margin-top:1px}
.ls{width:46px;height:15px;margin:3px 4px 0 3px;border:1px solid #222;box-sizing:border-box;display:flex;align-items:center;background:#4d4d4d;border-radius:2px}.ls i{width:25px;height:13px;background:#f00;margin-right:4px}
.nav{width:36px;height:17px;margin:2px 3px 0 0;border:1px solid #222;border-radius:4px;box-sizing:border-box;background:#4d4d4d;display:flex;align-items:center;justify-content:space-around}
</style><div class="ls"><i></i>${t('LS', 11)}</div><div class="nav">${ic('trir', 8, 'transform:scaleX(-1);opacity:.4')}<i style="width:1px;height:15px;background:#222"></i>${ic('trir', 8)}</div>` +
  LAYERS.map(([n, c, w, tw], i) => `<div class="k ${i ? '' : 'on'}" style="width:${w}px"><i style="background:${c}"></i>${n ? t(n, tw) : ''}</div>`).join(''));

define('filter-chip', el => `<style>:host{display:grid;place-items:center;box-sizing:border-box;height:${el.hasAttribute('low') ? 23 : 25}px;width:${el.getAttribute('width')}px;border:1px solid #262626;border-radius:3px;background:${el.hasAttribute('on') ? '#6384a6' : '#525252'};color:#f0f0f0}</style>${t(el.textContent, el.getAttribute('tw'))}`);
const chip = (s, w, tw, on = 'on') => `<filter-chip ${on} width="${w}" tw="${tw}">${s}</filter-chip>`;

define('snap-row', el => `<style>:host{display:flex;height:20px;align-items:center;box-sizing:border-box;border-bottom:1px solid #323232;background:${el.hasAttribute('sel') ? '#6384a6' : '#3a3a3a'}}
.c{width:16px;height:16px;box-sizing:border-box;border:1px solid #262626;border-radius:3px;background:#525252;margin:0 27px 0 15px;display:grid;place-items:center}</style>
<div class="c">${el.hasAttribute('ck') ? ic('check', 10) : ''}</div>${t(el.textContent, el.getAttribute('tw'))}`);
const SNAP = [['Track/Arcs Vertices', 92, 'ck sel'], ['Track/Arcs Lines', 79, ''], ['Arc Centers', 58, 'ck'], ['Intersections', 66, 'ck'], ['Pad Centers', 61, 'ck'], ['Pad Vertices', 61, ''], ['Pad Edges', 53, ''], ['Via Centers', 58, 'ck'], ['Regions/Polygons/F...', 112, 'ck'], ['Board Shape', 66, ''], ['Footprint Origins', 90, ''], ['3D Body Snap Points', 107, ''], ['Texts', 24, '']];

define('panel-section', el => `<style>:host{display:block}h3{margin:0;display:flex;align-items:center;gap:4px;height:18px;font-size:11.500px;color:#fff;padding-left:1px}
.box{background:#484848;border-radius:3px;margin-top:4px;box-sizing:border-box;height:${el.getAttribute('h')}px;width:204px;padding:6px 6px 0}</style>
<h3>${ic('tri', 6)}${t(el.getAttribute('name'), el.getAttribute('tw'))}</h3><div class="box"><slot></slot></div>`);

define('properties-panel', () => `<style>
:host{display:flex;flex-direction:column;width:236px;background:#404040;font-size:11.500px;height:953px}
.top{display:flex;align-items:center;height:26px;margin:8px 0 9px 8px}
.clip{overflow:hidden;width:131px;margin:0 5px 0 9px;display:flex;justify-content:flex-end}
.fb{width:44px;height:26px;border:1px solid #232323;border-radius:3px;box-sizing:border-box;display:flex;background:#4d4d4d}.fb div{width:28px;display:grid;place-items:center;background:#6384a6;border-right:1px solid #232323}
search-field{margin:0 8px 0 8px;height:21px}
.hc{height:19px;margin:13px 12px 0 9px;border:1px solid #262626;border-bottom:0;border-radius:4px 4px 0 0;background:#353535;display:flex;align-items:center;justify-content:center;gap:6px;box-sizing:border-box}
.tabs{display:flex;height:18px;margin:0 10px 0 8px;padding-left:8px;border-bottom:1px solid #222}.tabs div{box-sizing:border-box;border:1px solid #262626;border-bottom:0;border-radius:3px 3px 0 0;display:grid;place-items:center;width:96px;background:#4d4d4d}.tabs div+div{width:111px;background:#353535}
.body{display:flex;height:795px;overflow:hidden;padding-left:8px}.main{width:204px;padding-top:7px}
.line{display:flex;gap:4px;margin-bottom:4px}
.bar{width:18px;display:flex;flex-direction:column;align-items:center;padding-top:4px;margin-left:-1.500px}.bar b{width:6px;height:311px;background:#858585;border-radius:3px;margin-top:2px}
.between{display:flex;justify-content:space-between;align-items:center}
.seg{display:flex;height:23px;border:1px solid #262626;border-radius:3px;box-sizing:border-box;background:#525252;overflow:hidden}.seg div{display:grid;place-items:center;flex:1;overflow:hidden}.seg .on{background:#6384a6;border:solid #262626;border-width:0 1px}
.tbl{height:281px;border:1px solid #222;box-sizing:border-box;background:#3a3a3a;overflow:hidden}
.th{display:flex;height:20px;border-bottom:1px solid #222;background:#404040;align-items:center;box-sizing:border-box;padding-left:8px;color:#ccc}.th i{width:1px;height:12px;background:#222}
.tb{display:flex}.tb>.rows{width:176px}.sb{width:15px;background:#404040;display:flex;flex-direction:column;align-items:center;padding-top:4px;height:256px}.sb b{width:6px;height:226px;background:#858585;border-radius:3px;margin:4px 0 4px}
.f{display:flex;justify-content:flex-end;align-items:center;gap:12px;color:#ccc}.in{width:82px;height:21px;background:#2d2d2d;border:1px solid #222;border-radius:3px;box-sizing:border-box;display:flex;align-items:center;justify-content:space-between;padding:0 5px 0 3px;color:#fff}
.kv{display:flex;gap:12px;height:17px;align-items:center;color:#ccc}.kv>span{width:98px;display:flex;justify-content:flex-end}
</style>
<panel-head>${t('Properties', 58)}</panel-head>
<div class="top">${t('Board', 31)}<div class="clip">${t('Components (and 12 more)', 137)}</div><div class="fb"><div>${ic('funnel', 12)}</div>${ic('caret', 9, 'margin:8px 0 0 2px')}</div></div>
<search-field>${t('Search', 34)}</search-field>
<div class="hc">${t('Health Check', 68)}${ic('warn', 12)}</div>
<div class="tabs"><div>${t('General', 40)}</div><div>${t('Parameters', 56)}</div></div>
<div class="body"><div class="main">
<panel-section name="Selection Filter" tw="76" h="182">
<div class="line"><filter-chip low width="73" tw="39">All - On</filter-chip></div>
<div class="line">${chip('Components', 84, 66)}${chip('3D Bodies', 70, 52)}</div>
<div class="line">${chip('Keepouts', 66, 48)}${chip('Tracks', 48, 30)}${chip('Arcs', 39, 21)}</div>
<div class="line">${chip('Pads', 42, 24)}${chip('Vias', 39, 21)}${chip('Regions', 60, 42)}</div>
<div class="line">${chip('Polygons', 65, 47)}${chip('Fills', 38, 20)}${chip('Texts', 42, 24)}</div>
<div class="line">${chip('Rooms', 53, 35)}${chip('Other', 48, 30)}</div></panel-section>
<panel-section name="Snap Options" tw="70" h="440" style="margin-top:13px">
<div class="line">${chip('Grids', 45, 27)}${chip('Guides', 54, 36, '')}${chip('Axes', 41, 23, '')}</div>
<div class="between" style="height:21px;padding-right:3px"><b>${t('Snapping', 47)}</b><span style="color:#888">${t('Shift+E', 38)}</span></div>
<div class="seg"><div>${t('All Layers', 47)}</div><div class="on">${t('Current Laye', 61)}</div><div>${t('Off', 17)}</div></div>
<div class="between" style="height:24px"><b>${t('Objects for snapping', 104)}</b></div>
<div class="tbl"><div class="th">${t('On/Off', 37)}<i style="margin:0 7px 0 5px"></i>${t('Objects', 39)}<i style="margin-left:80px"></i></div>
<div class="tb"><div class="rows">${SNAP.map(([n, w, a]) => `<snap-row ${a} tw="${w}">${n}</snap-row>`).join('')}</div><div class="sb">${ic('up', 7)}<b></b>${ic('down', 7)}</div></div></div>
<div class="f" style="margin-top:5px">${t('Snap Distance', 73)}<div class="in">${t('0.203mm', 45)}${ic('caret', 9)}</div></div>
<div class="f" style="margin-top:4px">${t('Axis Snap Range', 85)}<div class="in" style="padding-left:6px;height:20px">${t('5.08mm', 38)}</div></div></panel-section>
<panel-section name="Board Information" tw="96" h="79" style="margin-top:8px">
<div style="height:19px;margin-top:2px"><b>${t('Board Size', 52)}</b></div>
<div class="kv"><span>${t('Horizontal:', 56)}</span>${t('18.034mm', 50)}</div><div class="kv"><span>${t('Vertical:', 39)}</span>${t('21.463mm', 50)}</div><div class="kv"><span>${t('Area:', 25)}</span>${t('387.064 sq.mm', 75)}</div></panel-section>
</div><div class="bar">${ic('up', 7)}<b></b>${ic('down', 7, 'margin-top:454px')}</div></div>
<div style="padding:10px 0 0 3px;color:#ccc">${t('Nothing selected', 88)}</div>`);

define('status-bar', `<style>:host{display:flex;height:24px;background:#404040;border-bottom:3px solid #23221f;font-size:11.500px;align-items:center;box-sizing:content-box;padding-left:5px}
i{width:2px;height:17px;background:#333}.p{width:45px;height:18px;border:1px solid #222;border-radius:3px;background:#4d4d4d;display:grid;place-items:center;box-sizing:border-box;margin:0 3px 0 auto}</style>
${t('X:-11.049mm Y:19.685mm', 126)}<b style="width:12px"></b>${t('Grid: 0.127mm', 73)}<b style="width:21px"></b>${t('(Hotspot Snap)', 77)}<i style="margin-left:171px"></i><i style="margin-left:484px"></i><div class="p">${t('Panels', 33)}</div>`);

define('pcb-app', `<style>
:host{display:flex;flex-direction:column;width:1919px;height:1035px;background:#333;position:relative}
.mid{display:flex;height:956px;padding:3px 2px 0 3px;box-sizing:border-box}
.left{display:flex;height:953px}.ed{width:1473px;margin:0 6px;display:flex;flex-direction:column}
.cv{height:906px;background:#6f6b69;position:relative}
draw-toolbar{position:absolute;left:536px;top:3px}
.gap{height:3px}
</style>
<title-bar></title-bar><menu-bar></menu-bar>
<div class="mid"><div class="left"><projects-panel></projects-panel></div>
<div class="ed"><doc-tabs></doc-tabs><div class="cv"><pcb-board></pcb-board><draw-toolbar></draw-toolbar></div><layer-bar></layer-bar></div>
<properties-panel></properties-panel></div><div class="gap"></div>
<status-bar></status-bar>`);
</script>
</body>
</html>
